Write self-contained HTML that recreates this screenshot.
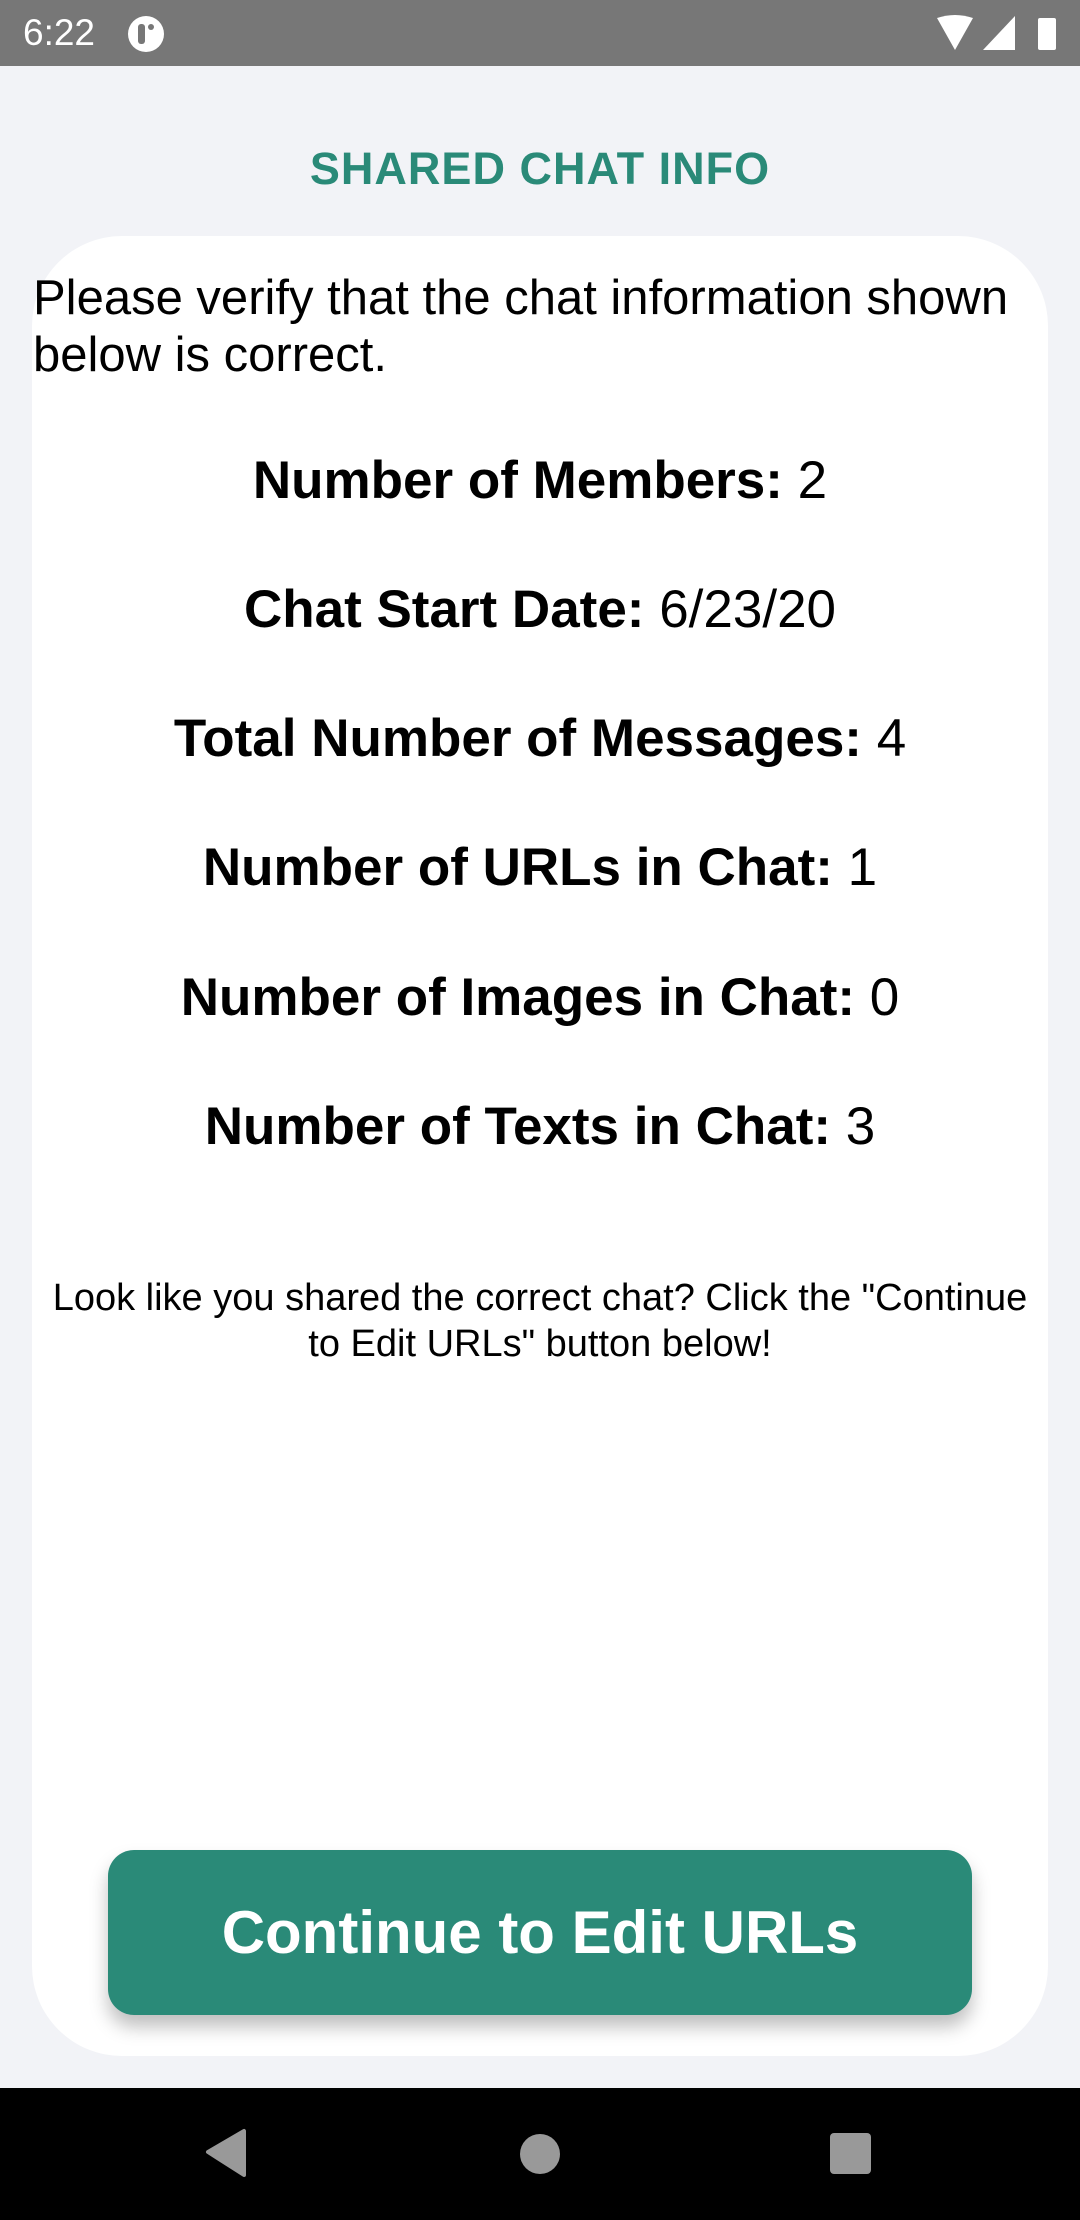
<!DOCTYPE html>
<html><head><meta charset="utf-8"><style>
*{margin:0;padding:0;box-sizing:border-box}
body{width:1080px;height:2220px;background:#f2f3f7;font-family:"Liberation Sans",Roboto,sans-serif;position:relative;overflow:hidden}
.sb{position:absolute;left:0;top:0;width:1080px;height:66px;background:#777}
.sb .t{position:absolute;left:23px;top:12px;color:#fff;font-size:37px}
.title{position:absolute;top:143px;left:0;width:1080px;text-align:center;color:#2a8a78;font-weight:bold;font-size:45px;letter-spacing:1px}
.card{position:absolute;left:32px;top:236px;width:1016px;height:1820px;background:#fff;border-radius:90px}
.intro{position:absolute;left:33px;top:270px;font-size:49px;line-height:57px;color:#000;width:1040px}
.row{position:absolute;left:32px;width:1016px;text-align:center;font-size:53px;color:#000}
.row b{font-weight:bold}
.note{position:absolute;left:32px;width:1016px;top:1275px;text-align:center;font-size:38px;line-height:46px;color:#000}
.btn{position:absolute;left:108px;top:1850px;width:864px;height:165px;background:#2a8a78;border-radius:26px;box-shadow:0 12px 18px rgba(0,0,0,.25);color:#fff;font-weight:bold;font-size:60px;text-align:center;line-height:165px}
.nav{position:absolute;left:0;top:2088px;width:1080px;height:132px;background:#000}
</style></head><body>
<div class="sb"><span class="t">6:22</span>
<svg style="position:absolute;left:127px;top:15px" width="40" height="38"><circle cx="19" cy="19" r="18" fill="#fff"/><rect x="11" y="9" width="7" height="20" rx="3" fill="#777"/><circle cx="24" cy="12" r="3" fill="#777"/></svg>
<svg style="position:absolute;left:935px;top:14px" width="130" height="40"><path d="M2 4 Q20 -2 38 4 L20 36 Z" fill="#fff"/><path d="M80 2 L80 36 L48 36 Z" fill="#fff"/><rect x="103" y="4" width="18" height="32" rx="2" fill="#fff"/></svg>
</div>
<div class="title">SHARED CHAT INFO</div>
<div class="card"></div>
<div class="intro">Please verify that the chat information shown below is correct.</div>
<div class="row" style="top:450px"><b>Number of Members:</b> 2</div>
<div class="row" style="top:579px"><b>Chat Start Date:</b> 6/23/20</div>
<div class="row" style="top:708px"><b>Total Number of Messages:</b> 4</div>
<div class="row" style="top:837px"><b>Number of URLs in Chat:</b> 1</div>
<div class="row" style="top:967px"><b>Number of Images in Chat:</b> 0</div>
<div class="row" style="top:1096px"><b>Number of Texts in Chat:</b> 3</div>
<div class="note">Look like you shared the correct chat? Click the "Continue<br>to Edit URLs" button below!</div>
<div class="btn">Continue to Edit URLs</div>
<div class="nav">
<svg style="position:absolute;left:200px;top:40px" width="50" height="50"><path d="M44 3 L44 47 L8 24 Z" fill="#999" stroke="#999" stroke-width="4" stroke-linejoin="round"/></svg>
<svg style="position:absolute;left:518px;top:44px" width="44" height="44"><circle cx="22" cy="22" r="20" fill="#999"/></svg>
<svg style="position:absolute;left:829px;top:44px" width="44" height="44"><rect x="1" y="1" width="41" height="41" rx="4" fill="#999"/></svg>
</div>
</body></html>
